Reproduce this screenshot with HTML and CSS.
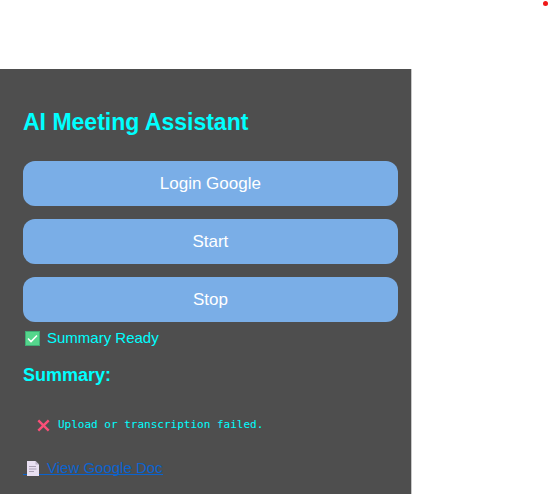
FILE: index.html
```html
<!DOCTYPE html>
<html lang="en">
<head>
<meta charset="utf-8">
<title>AI Meeting Assistant</title>
<link rel="stylesheet" href="styles.css">
</head>
<body>
<span class="record-dot"></span>
<main class="panel">
  <h1 class="title">AI Meeting Assistant</h1>
  <div class="actions">
    <button class="action" type="button">Login Google</button>
    <button class="action" type="button">Start</button>
    <button class="action" type="button">Stop</button>
  </div>
  <p class="status">
    <svg class="icon" viewBox="0 0 15 15" aria-hidden="true"><rect width="15" height="15" fill="#3fae76"/><rect x="1" y="1" width="13" height="13" fill="#55d68c"/><path d="M3 7.5 6 10.5 12 4.5" fill="none" stroke="#fff" stroke-width="1.6"/></svg>
    <span>Summary Ready</span>
  </p>
  <h2 class="subtitle">Summary:</h2>
  <pre class="summary"><svg class="cross" viewBox="0 0 13 13" aria-hidden="true"><path d="M1.3 1.3 11.7 11.7M11.7 1.3 1.3 11.7" fill="none" stroke="#fb4f78" stroke-width="2.4"/></svg><span>Upload or transcription failed.</span></pre>
  <a class="doc-link" href="#doc"><svg class="doc" viewBox="0 0 12 15" aria-hidden="true"><path d="M0 0H8.5L12 3.5V15H0Z" fill="#e9e0f2"/><path d="M8.5 0V3.5H12Z" fill="#bcb2c6"/><path d="M2 5.5H9M2 8H9.5M2 10.5H7" stroke="#aaa0b4" fill="none"/></svg>View Google Doc</a>
</main>
</body>
</html>
```
FILE: styles.css
```css
* {
  box-sizing: border-box;
}

body {
  display: flex;
  flex-direction: column;
  min-height: 100vh;
  margin: 0;
  padding-top: 69px;
  background: #fff;
  font-family: "Liberation Sans", Arial, sans-serif;
}

.record-dot {
  position: absolute;
  top: 1px;
  right: 1px;
  width: 5px;
  height: 5px;
  border-radius: 50%;
  background: #f01818;
}

.panel {
  flex: 1;
  width: 75%;
  padding: 38px 13px 8px 23px;
  border-right: 1px solid #c8c8c8;
  background: #4e4e4e;
  color: #0ff;
}

.title {
  margin: 0 0 24px;
  font-size: 23px;
  line-height: 30px;
}

.actions {
  display: grid;
  gap: 13px;
}

.action {
  height: 45px;
  border: 0;
  border-radius: 12px;
  background: #7aaee7;
  color: #fff;
  font: 17px "Liberation Sans", Arial, sans-serif;
}

.status {
  display: flex;
  align-items: center;
  gap: 7px;
  margin: 7px 0 0;
  padding-left: 2px;
  font-size: 15px;
  line-height: 18px;
}

.icon {
  width: 15px;
  height: 15px;
}

.subtitle {
  margin: 16px 0 0;
  font-size: 18px;
  line-height: 24px;
}

.summary {
  display: flex;
  align-items: center;
  gap: 8px;
  margin: 30px 0 0;
  padding-left: 14px;
  font: 11px/16px "DejaVu Sans Mono", monospace;
}

.cross {
  width: 13px;
  height: 13px;
}

.doc-link {
  display: inline-flex;
  align-items: center;
  gap: 8px;
  margin-top: 25px;
  padding-left: 4px;
  background: linear-gradient(#0b63ce, #0b63ce) 0 16px / 100% 1px no-repeat;
  color: #0b63ce;
  font-size: 15px;
  line-height: 20px;
  text-decoration: none;
}

.doc {
  width: 12px;
  height: 15px;
}
```
